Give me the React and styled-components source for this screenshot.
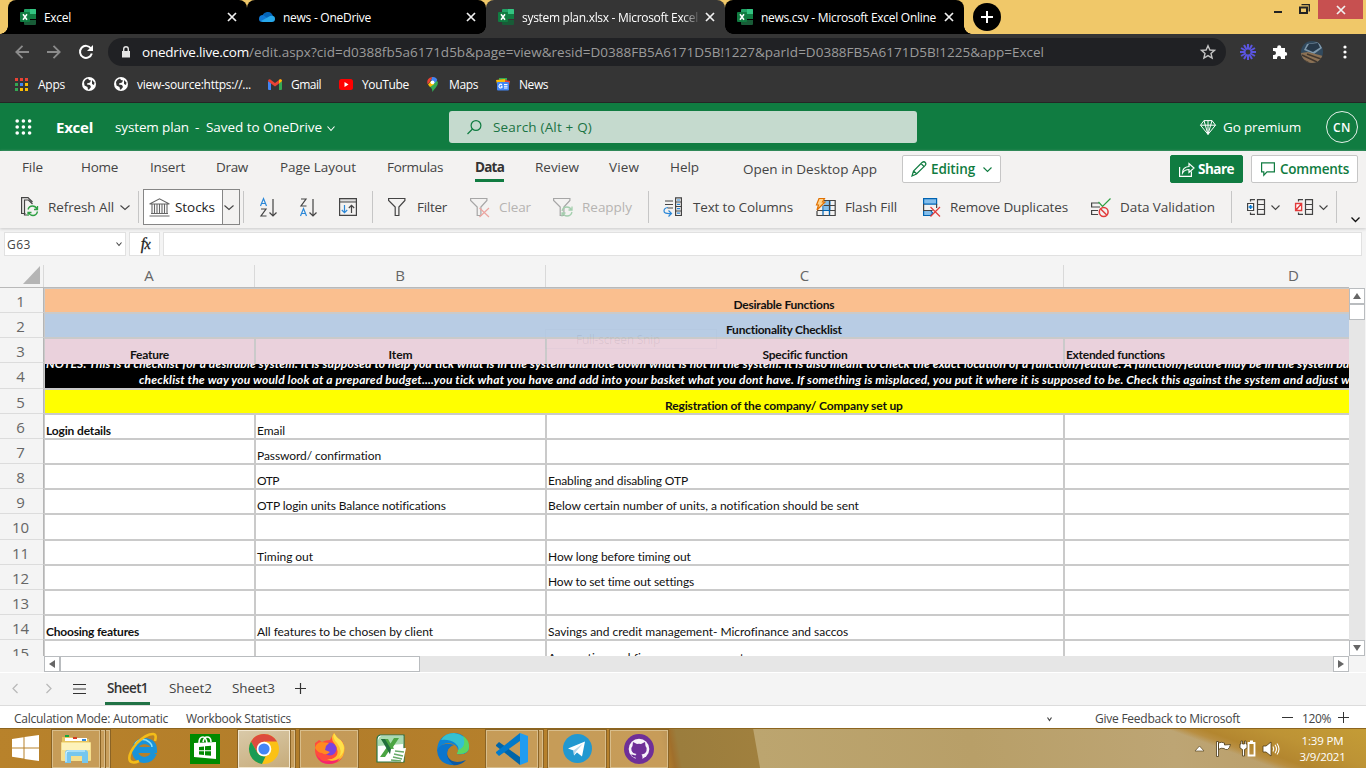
import React, { useLayoutEffect, useRef, useState } from "react";
import styled, { createGlobalStyle, css } from "styled-components";

const Global = createGlobalStyle`
  * { box-sizing: border-box; }
  html, body { margin: 0; padding: 0; overflow: hidden; }
  body { font-family: "Open Sans", "Noto Sans", sans-serif; font-size: 13.5px; color: #444; }
  svg { display: block; flex: none; overflow: visible; }
`;

/* ---------- text that is tracked to an exact width ---------- */
const TextBox = styled.span`
  display: block;
  flex: none;
  white-space: nowrap;
  width: ${(p) => (p.$w ? p.$w + "px" : "auto")};
  margin-left: ${(p) => p.$ml || 0}px;
  margin-top: ${(p) => p.$mt || 0}px;
  font-size: ${(p) => (p.$size ? p.$size + "px" : "inherit")};
  font-weight: ${(p) => p.$weight || "inherit"};
  color: ${(p) => p.$color || "inherit"};
`;

function Text({ children, w, ml, mt, size, weight, color }) {
  const ref = useRef(null);
  const [tracking, setTracking] = useState(0);
  useLayoutEffect(() => {
    if (!w || !ref.current) return;
    const natural = ref.current.getBoundingClientRect().width;
    setTracking((w - natural) / String(children).length);
  }, []);
  return (
    <TextBox $w={w} $ml={ml} $mt={mt} $size={size} $weight={weight} $color={color}>
      <span ref={ref} style={{ letterSpacing: tracking }}>{children}</span>
    </TextBox>
  );
}

const Glyph = styled.svg`
  width: ${(p) => p.$w}px;
  height: ${(p) => p.$h}px;
  margin-left: ${(p) => p.$ml || 0}px;
  margin-top: ${(p) => p.$mt || 0}px;
  fill: none;
  stroke: ${(p) => p.$stroke || "none"};
  stroke-width: ${(p) => p.$sw || 1};
`;

const Icon = ({ w, h, ml, mt, stroke, sw, children }) => (
  <Glyph viewBox={`0 0 ${w} ${h}`} $w={w} $h={h} $ml={ml} $mt={mt} $stroke={stroke} $sw={sw}>
    {children}
  </Glyph>
);

const Chevron = ({ w = 10, h = 5, ml, mt, color = "#444", sw = 1.1 }) => (
  <Icon w={w} h={h} ml={ml} mt={mt} stroke={color} sw={sw}>
    <path d={`M.5 .5L${w / 2} ${h - 0.5}L${w - 0.5} .5`} />
  </Icon>
);

const Screen = styled.div`
  width: 1366px;
  height: 768px;
  display: flex;
  flex-direction: column;
  overflow: hidden;
  background: #f4f4f4;
`;

/* ---------- browser chrome ---------- */
const TabStrip = styled.div`
  height: 34px;
  flex: none;
  display: flex;
  background: #f0c869;
  padding-left: 8px;
`;

const Tab = styled.div`
  position: relative;
  z-index: ${(p) => (p.$active ? 2 : 1)};
  width: 239px;
  height: 34px;
  display: flex;
  align-items: center;
  padding-left: 12px;
  border-radius: 8px 8px 0 0;
  background: ${(p) => (p.$active ? "#353535" : "#000")};
  color: #fff;
  font-size: 12px;
  &::before, &::after {
    content: "";
    position: absolute;
    bottom: 0;
    width: 8px;
    height: 8px;
  }
  &::before {
    left: -8px;
    background: radial-gradient(circle at 0 0, transparent 7.5px, ${(p) => (p.$active ? "#353535" : "#000")} 8px);
  }
  &::after {
    right: -8px;
    background: radial-gradient(circle at 100% 0, transparent 7.5px, ${(p) => (p.$active ? "#353535" : "#000")} 8px);
  }
`;

const TabTitle = styled.div`
  width: 176px;
  margin-left: 8px;
  overflow: hidden;
  ${(p) => p.$fade && css`mask-image: linear-gradient(90deg, #000 160px, transparent 179px);`}
`;

const TabDivider = styled.i`
  position: absolute;
  right: -1px;
  top: 8px;
  width: 1px;
  height: 19px;
  background: #555;
`;

const NewTab = styled.div`
  width: 28px;
  height: 28px;
  margin: 3px 0 0 9px;
  border-radius: 50%;
  background: #000;
  display: grid;
  place-items: center;
`;

const WindowButtons = styled.div`
  margin-left: auto;
  display: flex;
  height: 19px;
`;

const CloseWindow = styled.div`
  width: 45px;
  height: 19px;
  margin: 0 3px 0 8px;
  background: #c75050;
  display: grid;
  place-items: center;
`;

const AddressRow = styled.div`
  height: 36px;
  flex: none;
  display: flex;
  align-items: center;
  padding-left: 15px;
  background: #353535;
`;

const Omnibox = styled.div`
  width: 1118px;
  height: 28px;
  margin: -1px 0 0 15px;
  border-radius: 14px;
  background: #202124;
  display: flex;
  align-items: center;
  padding-left: 14px;
  font-size: 13.5px;
`;

const Avatar = styled.svg`
  && { overflow: hidden; }
  width: 22px;
  height: 22px;
  margin-left: 14px;
  border-radius: 50%;
`;

const Bookmarks = styled.div`
  height: 33px;
  flex: none;
  display: flex;
  align-items: center;
  padding: 0 0 4px 15px;
  background: #353535;
  border-bottom: 1px solid #252525;
  color: #fff;
  font-size: 12px;
`;

/* ---------- excel header ---------- */
const AppHeader = styled.header`
  height: 48px;
  flex: none;
  display: flex;
  align-items: center;
  padding-left: 15px;
  background: #107c41;
  color: #fff;
`;

const Search = styled.div`
  width: 468px;
  height: 32px;
  margin-left: 114px;
  border-radius: 3px;
  background: #c5dace;
  display: flex;
  align-items: center;
  padding-left: 18px;
  color: #1a7343;
`;

const UserBadge = styled.div`
  width: 32px;
  height: 32px;
  margin-left: 25px;
  border: 1px solid #e4f0e9;
  border-radius: 50%;
  display: grid;
  place-items: center;
  font-weight: 600;
`;

const Ribbon = styled.section`
  height: 77px;
  flex: none;
  background: #f3f2f1;
  box-shadow: 0 1px 3px #c8c8c8;
  position: relative;
`;

const RibbonTabs = styled.nav`
  height: 36px;
  display: flex;
  align-items: center;
  padding-left: 22px;
`;

const RibbonTab = styled.div`
  height: 26px;
  align-self: flex-start;
  margin: 5px 0 0 ${(p) => p.$ml || 0}px;
  padding-top: 2px;
  line-height: 19px;
  ${(p) => p.$active && css`
    color: #333;
    border-bottom: 3px solid #107c41;
  `}
`;

const RibbonButton = styled.button`
  height: 28px;
  width: ${(p) => p.$w}px;
  margin: 0 0 0 ${(p) => p.$ml}px;
  padding: 0 0 0 ${(p) => p.$pl}px;
  display: flex;
  align-items: center;
  border-radius: 2px;
  border: 1px solid ${(p) => (p.$solid ? "#107c41" : "#c6c6c6")};
  background: ${(p) => (p.$solid ? "#107c41" : "#fff")};
  color: ${(p) => (p.$solid ? "#fff" : "#107c41")};
  font: 600 13.5px "Open Sans", sans-serif;
`;

const Tools = styled.div`
  height: 40px;
  display: flex;
  align-items: center;
  padding-left: 21px;
`;

const Separator = styled.i`
  width: 1px;
  height: 32px;
  margin-left: ${(p) => p.$ml}px;
  background: #c6c6c6;
  flex: none;
`;

const StocksBox = styled.div`
  width: 97px;
  height: 36px;
  margin: 0 0 0 4px;
  flex: none;
  display: flex;
  align-items: center;
  border: 1px solid #868686;
  background: linear-gradient(90deg, #fff 78px, #868686 78px 79px, #f3f2f1 79px);
  padding-left: 5px;
  color: #222;
`;

const FormulaBar = styled.div`
  height: 37px;
  flex: none;
  display: flex;
  gap: 3px;
  padding: 4px 4px 9px;
  background: #f4f4f4;
`;

const Field = styled.div`
  width: ${(p) => (p.$w ? p.$w + "px" : "auto")};
  flex: ${(p) => (p.$w ? "none" : 1)};
  height: 24px;
  border: 1px solid #e1e1e1;
  background: #fff;
  display: flex;
  align-items: center;
  justify-content: ${(p) => (p.$center ? "center" : "flex-start")};
  padding-left: ${(p) => (p.$center ? 2 : 2)}px;
`;

const Fx = styled.span`
  font: italic 16px "Liberation Serif", serif;
  letter-spacing: -0.5px;
  color: #222;
  -webkit-text-stroke: 0.3px #222;
  small { font-size: 14px; }
`;

/* ---------- sheet ---------- */
const ColumnHeads = styled.div`
  height: 22px;
  flex: none;
  display: flex;
  background: #f4f4f4;
  color: #666;
  font-size: 15px;
`;

const Corner = styled.div`
  width: 44px;
  flex: none;
  display: flex;
  justify-content: flex-end;
  padding: 1px 3px 0 0;
  border-right: 1px solid #d9d9d9;
`;

const ColumnHead = styled.div`
  width: ${(p) => p.$w}px;
  flex: none;
  line-height: 20px;
  text-align: center;
  border-right: 1px solid #d9d9d9;
`;

const SheetArea = styled.div`
  height: 369px;
  flex: none;
  display: flex;
  position: relative;
`;

const SheetView = styled.div`
  width: 1349px;
  overflow: hidden;
  border-top: 1px solid #b9b9b9;
`;

const TopEdge = styled.div`
  height: 1px;
  margin-left: 44px;
  background: #cacaca;
`;

const Row = styled.div`
  height: ${(p) => p.$h}px;
  display: flex;
`;

const RowHead = styled.div`
  width: 44px;
  flex: none;
  padding-top: 1px;
  text-align: center;
  padding-right: 2px;
  font-size: 15px;
  line-height: 24px;
  color: #666;
  background: #f4f4f4;
  border-right: 1px solid #b5b5b5;
  border-bottom: 1px solid #dcdcdc;
  margin: -1px 0 1px;
`;

const Cell = styled.div`
  width: ${(p) => p.$w}px;
  flex: none;
  display: flex;
  align-items: flex-end;
  justify-content: ${(p) => (p.$center ? "center" : "flex-start")};
  padding: 0 0 ${(p) => p.$lift || 0}px ${(p) => (p.$center ? 0 : 1)}px;
  overflow: hidden;
  background: ${(p) => p.$bg || "#fff"};
  border-right: ${(p) => (p.$bare ? 0 : 2)}px solid #cacaca;
  border-bottom: ${(p) => (p.$flush ? 0 : 2)}px solid #cacaca;
  color: ${(p) => p.$fg || "#111"};
  font-family: Lato, sans-serif;
  font-size: 12px;
  font-weight: ${(p) => (p.$bold ? 700 : 400)};
  line-height: 15px;
`;

const EdgeLine = styled.i`
  width: 1px;
  flex: none;
  background: #cacaca;
`;

const Notes = styled.div`
  align-self: flex-end;
  font-style: italic;
  line-height: 16px;
  color: #fff;
`;

const FadingSnip = styled.div`
  position: absolute;
  left: 545px;
  top: 42px;
  width: 172px;
  height: 20px;
  padding: 1px 0 0 30px;
  border: 1px solid rgba(140, 150, 190, 0.06);
  color: rgba(70, 60, 80, 0.09);
  font-size: 12px;
`;

const ScrollColumn = styled.div`
  width: 16px;
  display: flex;
  flex-direction: column;
  background: #e6e6e6;
  margin-top: 1px;
`;

const ScrollRow = styled.div`
  height: 16px;
  flex: none;
  width: 1305px;
  margin-left: 44px;
  display: flex;
  background: #e6e6e6;
`;

const ScrollPart = styled.div`
  width: ${(p) => p.$w}px;
  height: 16px;
  margin-left: ${(p) => p.$ml || 0}px;
  margin-top: ${(p) => p.$mt || 0};
  border: 1px solid #b9bcbf;
  background: #fff;
  display: grid;
  place-items: center;
`;

const SheetTabs = styled.div`
  height: 34px;
  flex: none;
  display: flex;
  align-items: center;
  border-top: 1px solid #fff;
  border-bottom: 1px solid #dcdcdc;
  background: #f4f4f4;
  padding-left: 12px;
`;

const SheetTab = styled.div`
  height: 32px;
  line-height: 31px;
  margin-left: ${(p) => p.$ml}px;
  padding: 0 2px;
  ${(p) => p.$active && css`box-shadow: inset 0 -3px #217346; color: #333;`}
`;

const StatusBar = styled.div`
  height: 22px;
  flex: none;
  display: flex;
  align-items: center;
  padding: 3px 0 0 14px;
  background: #fff;
  font-size: 12px;
`;

/* ---------- taskbar ---------- */
const Taskbar = styled.footer`
  height: 40px;
  flex: none;
  display: flex;
  border-top: 1px solid #8d651f;
  background:
    linear-gradient(200deg, #c49c36 0, #bd9335 35px, #b3862f 56px, rgba(184, 140, 60, 0.9) 62px, transparent 68px),
    linear-gradient(80deg, #b8822b 0, #b27d2a 330px, #b8822d 655px, #a06f2b 665px, #9b7d3d 672px, #a0803e 748px, #bca56f 749px, #b89f68 960px, #bda574 1160px, #b99a62 100%);
`;

const TaskSlot = styled.div`
  width: 62px;
  display: flex;
  align-items: center;
  padding: 0 3px 0 1px;
`;

const TaskPanel = styled.div`
  width: ${(p) => (p.$stack ? 52 : 59)}px;
  height: 38px;
  display: grid;
  place-items: center;
  border: 1px solid ${(p) => (p.$front ? "#f1e6cf" : "#d8bd8b")};
  outline: 1px solid #8a6325;
  background: ${(p) => (p.$front ? "linear-gradient(160deg,#d9c9a8,#c7ac7b)" : "rgba(211,178,125,.55)")};
`;

const PlainTask = styled.div`
  width: 58px;
  display: grid;
  place-items: center;
`;

const StackEdge = styled.i`
  width: 4px;
  height: 38px;
  border: 1px solid #d8bd8b;
  border-left: 0;
  outline: 1px solid #8a6325;
  background: rgba(211, 178, 125, 0.6);
  margin-left: 1px;
`;

const StartButton = styled.div`
  width: 51px;
  padding: 6px 0 0 12px;
`;

const Tray = styled.div`
  margin-left: auto;
  width: 171px;
  display: flex;
  align-items: center;
  color: #fff;
`;

const Clock = styled.div`
  margin-left: 19px;
  width: 47px;
  display: flex;
  flex-direction: column;
  align-items: center;
  font-size: 11.5px;
  line-height: 16px;
  padding-top: 1px;
`;

/* ---------- drawings ---------- */
const ExcelFavicon = () => (
  <Icon w={16} h={16}>
    <path fill="#21a366" d="M5 0h10q1 0 1 1v4H4V1q0-1 1-1z" />
    <path fill="#33c481" d="M10 0h5q1 0 1 1v4h-6z" />
    <path fill="#107c41" d="M4 5h12v5H4z" />
    <path fill="#185c37" d="M4 8h6v3h6v4q0 1-1 1H5q-1 0-1-1z" />
    <rect y="3" width="10" height="10" rx="1" fill="#107c41" />
    <path d="M3 5.2l4 5.6M7 5.2l-4 5.6" stroke="#fff" strokeWidth="1.5" />
  </Icon>
);

const CloudFavicon = () => (
  <Icon w={16} h={16}>
    <path fill="#0364b8" d="M3 9C3 5 6 3 9 3c3 0 4 2 5 4L8 11z" />
    <path fill="#0f78d4" d="M0 10q0-4 4-4l7 5-6 2H3q-3 0-3-3z" />
    <path fill="#28a8ea" d="M2 12l9-5q5-1 5 3 0 3-3 3H4z" />
  </Icon>
);

const CloseX = ({ ml }) => (
  <Icon w={8} h={8} ml={ml} stroke="#f1f1f1" sw={1.7}><path d="M0 0l8 8M8 0l-8 8" /></Icon>
);

const GlobeMark = ({ ml }) => (
  <Icon w={14} h={14} ml={ml}>
    <circle cx="7" cy="7" r="7" fill="#fff" />
    <path fill="#353535" d="M2 5q1-3 4-3.500l1 1.500 2 .5-1 2-3 1v1l3 .5 1 2-2 2.500H6L5.500 10 2.500 8.500zM10 3l2.500 2.500L12 8l-2-1z" />
  </Icon>
);

const BookmarkApps = () => (
  <Icon w={13} h={13}>
    {["#ea4335", "#ea4335", "#ea4335", "#34a853", "#4285f4", "#fbbc05", "#34a853", "#fbbc05", "#fbbc05"].map((c, i) => (
      <rect key={i} x={(i % 3) * 5} y={Math.floor(i / 3) * 5} width="3" height="3" fill={c} />
    ))}
  </Icon>
);

const Funnel = ({ ml, muted, mark }) => (
  <Icon w={20} h={20} ml={ml} stroke={muted ? "#a6a6a6" : "#444"} sw={1.2}>
    <path d="M.6 1.500h16.300v2l-6 6.500v8.500H7.200V10l-6.600-6.500z" />
    {mark === "clear" && <path stroke="#eca5a0" d="M9.500 11l9.500 9M19 11l-9.500 9" />}
    {mark === "again" && <g stroke="#a4cfae" strokeWidth="1.300"><path d="M9 14q1-4 5-4 3 0 4.500 3M19 9.500V13h-3.500M19 15q-1 4-5 4-3 0-4.500-3M9 19.500V16h3.500" /></g>}
  </Icon>
);

const SortIcon = ({ ml, down }) => (
  <Icon w={17} h={19} ml={ml} stroke="#444" sw={1.2}>
    {down ? (
      <g><path d="M1 1h5L1 8h5.500" /><path stroke="#2b88d8" d="M.5 18l3-7.500L6.500 18M1.500 15.500h4" /></g>
    ) : (
      <g><path stroke="#2b88d8" d="M.5 8l3-7.500L6.500 8M1.500 5.500h4" /><path d="M1 11h5l-5 7h5.500" /></g>
    )}
    <path d="M13 1v17M9.500 14.500L13 18l3.500-3.500" />
  </Icon>
);

const OutlineIcon = ({ ml, red }) => (
  <Icon w={18} h={16} ml={ml} stroke="#444" sw={1.2}>
    <path d="M10.500 .6h7v14.800h-7zM10.500 5.500h7M10.500 10.500h7M3.500 2.500V.6h4.500M3.500 13.500v1.900h4.500" />
    {red ? <path stroke="#e23b3b" strokeWidth="1.400" fill="#fff" d="M.6 4.500h6v7h-6zM.6 11.500l6-7" /> : <g><path fill="#fff" d="M.6 4.500h6v7h-6z" /><path stroke="#0078d4" strokeWidth="1.600" d="M3.600 6v4M1.600 8h4" /></g>}
  </Icon>
);

const COLS = [211, 291, 518, 460];
const HEIGHTS = [25, 25, 25, 26, 25, 25, 25, 25, 25, 26, 25, 25, 25, 25, 26];
const MERGED = { 1: ["#fabf8f", "Desirable Functions", 101], 2: ["#b8cce4", "Functionality Checklist", 116], 5: ["#ffff00", "Registration of the company/ Company set up", 238] };
const DATA = {
  3: [["Feature", 39], ["Item", 24], ["Specific function", 85], ["Extended functions", 99]],
  6: [["Login details", 65], ["Email", 28]],
  7: [null, ["Password/ confirmation", 124]],
  8: [null, ["OTP", 22], ["Enabling and disabling OTP", 140]],
  9: [null, ["OTP login units Balance notifications", 189], ["Below certain number of units, a notification should be sent", 311]],
  11: [null, ["Timing out", 56], ["How long before timing out", 143]],
  12: [null, null, ["How to set time out settings", 146]],
  14: [["Choosing features", 93], ["All features to be chosen by client", 176], ["Savings and credit management- Microfinance and saccos", 300]],
  15: [null, null, ["Accounting and finance management", 196]],
};

function SheetRow({ n }) {
  const h = HEIGHTS[n - 1];
  const merged = MERGED[n];
  return (
    <Row $h={h}>
      <RowHead>{n}</RowHead>
      <EdgeLine />
      {merged && (
        <Cell $w={1478} $bg={merged[0]} $center $bold $bare>
          <Text w={merged[2]}>{merged[1]}</Text>
        </Cell>
      )}
      {n === 4 && (
        <Cell $w={1478} $bg="#000" $bold $bare>
          <Notes>
            <Text w={1303}>NOTES. This is a checklist for a desirable system. It is supposed to help you tick what is in the system and note down what is not in the system. It is also meant to check the exact location of a function/feature. A function/feature may be in the system bu</Text>
            <Text w={1211} ml={93}>checklist the way you would look at a prepared budget....you tick what you have and add into your basket what you dont have. If something is misplaced, you put it where it is supposed to be. Check this against the system and adjust w</Text>
          </Notes>
        </Cell>
      )}
      {!merged && n !== 4 && COLS.map((w, i) => {
        const d = DATA[n] && DATA[n][i];
        return (
          <Cell key={i} $w={w} $bg={n === 3 ? "#ead1dc" : "#fff"} $center={n === 3 && i < 3} $bold={n === 3 || i === 0} $flush={n === 3} $lift={n === 3 ? 2 : 0}>
            {d && <Text w={d[1]}>{d[0]}</Text>}
          </Cell>
        );
      })}
    </Row>
  );
}

const TABS = [
  ["Excel", 27, ExcelFavicon],
  ["news - OneDrive", 88, CloudFavicon],
  ["system plan.xlsx - Microsoft Excel", 176, ExcelFavicon],
  ["news.csv - Microsoft Excel Online", 175, ExcelFavicon],
];

const Browser = () => (
  <>
    <TabStrip>
      {TABS.map(([title, w, Fav], i) => (
        <Tab key={title} $active={i === 2}>
          <Fav />
          <TabTitle $fade={i === 2}><Text w={w}>{title}</Text></TabTitle>
          <CloseX ml={8} />
          {i === 0 && <TabDivider />}
        </Tab>
      ))}
      <NewTab><Icon w={12} h={12} stroke="#fff" sw={2}><path d="M6 0v12M0 6h12" /></Icon></NewTab>
      <WindowButtons>
        <Icon w={8} h={3} mt={11}><rect width="8" height="2" fill="#222" /></Icon>
        <Icon w={11} h={11} ml={17} mt={4} stroke="#222" sw={1.3}><path strokeWidth="2" d="M1 3.500h7V9H1z" /><path d="M2.500 .6h7.800v7" /></Icon>
        <CloseWindow><CloseX /></CloseWindow>
      </WindowButtons>
    </TabStrip>
    <AddressRow>
      <Icon w={14} h={14} stroke="#8b8b8b" sw={1.8}><path d="M14 7H1.500M7.500 .8L1.300 7l6.200 6.200" /></Icon>
      <Icon w={14} h={14} ml={18} stroke="#8b8b8b" sw={1.8}><path d="M0 7h12.500M6.500 .8L12.700 7l-6.200 6.200" /></Icon>
      <Icon w={14} h={14} ml={18} stroke="#fff" sw={2}><path d="M12 3.500A6 6 0 1 0 12.800 8.500" /><path fill="#fff" stroke="none" d="M14 0v6H8z" /></Icon>
      <Omnibox>
        <Icon w={8} h={12}><path fill="#e4e4e4" d="M0 5h8v6.500H0z" /><path stroke="#e4e4e4" strokeWidth="1.400" d="M1.700 5V3a2.300 2.300 0 0 1 4.600 0v2" /></Icon>
        <Text w={107} ml={12} color="#fff">onedrive.live.com</Text>
        <Text w={795} color="#9b9b9b">/edit.aspx?cid=d0388fb5a6171d5b&amp;page=view&amp;resid=D0388FB5A6171D5B!1227&amp;parId=D0388FB5A6171D5B!1225&amp;app=Excel</Text>
        <Icon w={14} h={14} ml={157} stroke="#c4c4c4" sw={1.4}><path d="M7 .8l1.900 4.200 4.600.4-3.500 3 1.100 4.600L7 10.600 2.900 13 4 8.400.5 5.400 5.100 5z" /></Icon>
      </Omnibox>
      <Icon w={16} h={16} ml={14} stroke="#5b55e0" sw={2}>
        {[...Array(12)].map((_, i) => <path key={i} d="M8 0v5.500" transform={`rotate(${i * 30} 8 8)`} />)}
      </Icon>
      <Icon w={14} h={14} ml={17}><path fill="#fff" d="M0 3h4.200V2.200a2 2 0 0 1 4 0V3H12v4h.3a1.900 1.900 0 0 1 0 3.800H12V14H8v-1a2 2 0 0 0-4 0v1H0v-4h1a2 2 0 0 0 0-4H0z" /></Icon>
      <Avatar viewBox="0 0 22 22">
        <rect width="22" height="22" fill="#31495d" />
        <path fill="#7f98ab" d="M3 9l3-6 12-2 3 6-8 6z" /><path fill="#263849" d="M5 8l3-5 9-1 2 4.500-7 4.500z" />
        <path fill="#8b7154" d="M0 12l7-1 15 4v7H0z" /><path stroke="#41372e" strokeWidth="1.500" fill="none" d="M1 14l15 7M6 13l14 5M0 18l8 4" />
      </Avatar>
      <Icon w={4} h={14} ml={20}><circle cx="2" cy="2" r="1.600" fill="#fff" /><circle cx="2" cy="7" r="1.600" fill="#fff" /><circle cx="2" cy="12" r="1.600" fill="#fff" /></Icon>
    </AddressRow>
    <Bookmarks>
      <BookmarkApps />
      <Text w={27} ml={10}>Apps</Text>
      <GlobeMark ml={17} />
      <GlobeMark ml={18} />
      <Text w={114} ml={9}>view-source:https://...</Text>
      <Icon w={14} h={11} ml={17}><path fill="#4285f4" d="M0 2l3 2v7H1q-1 0-1-1z" /><path fill="#34a853" d="M14 2l-3 2v7h2q1 0 1-1z" /><path fill="#ea4335" d="M0 2q0-2 2-1.800L7 4l5-3.800Q14 0 14 2l-3 2.500L7 7.500 3 4.500z" /><path fill="#fbbc04" d="M14 2l-3 2.500V1l1-.8Q14 0 14 2z" /></Icon>
      <Text w={30} ml={9}>Gmail</Text>
      <Icon w={14} h={11} ml={18}><rect width="14" height="11" rx="2.500" fill="#f00" /><path fill="#fff" d="M5.500 3l4 2.500-4 2.500z" /></Icon>
      <Text w={47} ml={9}>YouTube</Text>
      <Icon w={11} h={15} ml={18}><path fill="#34a853" d="M5.500 15Q5 11 2.500 9l6-6Q11 4 11 5.500q0 3-2.500 5.500-2 2-3 4z" /><path fill="#fbbc04" d="M1 7.500l3-3.500 3.500 3L3 10z" /><path fill="#4285f4" d="M5 0q4-.5 5.300 3L7.500 6.500 4 3z" /><path fill="#ea4335" d="M5.500 0L2 6 .3 7Q-.8 1 5.500 0z" /><circle cx="5.500" cy="5.300" r="1.900" fill="#fff" /></Icon>
      <Text w={29} ml={11}>Maps</Text>
      <Icon w={14} h={13} ml={18}><path fill="#34a853" d="M3 0h8v4H3z" /><path fill="#fbbc04" d="M0 2l9-1 1 3-9 2z" /><path fill="#ea4335" d="M9 2l5 1-1 5H9z" /><rect x="1" y="4" width="12" height="8.500" rx="1" fill="#4285f4" /><path stroke="#fff" strokeWidth="1.100" d="M6 6.800a1.800 1.800 0 1 0 0 2.600V8.300H4.700M8 6.500h3.500M8 8.300h3.500M8 10h3.500" /></Icon>
      <Text w={29} ml={9}>News</Text>
    </Bookmarks>
  </>
);

const Header = () => (
  <AppHeader>
    <Icon w={17} h={16}>
      {[...Array(9)].map((_, i) => <circle key={i} cx={2.2 + (i % 3) * 6.200} cy={2 + Math.floor(i / 3) * 6} r="1.800" fill="#fff" />)}
    </Icon>
    <Text w={37} ml={24} size={15} weight={700}>Excel</Text>
    <Text w={74} ml={22}>system plan</Text>
    <Text w={5} ml={6}>-</Text>
    <Text w={116} ml={6}>Saved to OneDrive</Text>
    <Chevron w={8} h={5} ml={5} mt={2} color="#fff" />
    <Search>
      <Icon w={15} h={15} stroke="#107c41" sw={1.2}><circle cx="9" cy="5.500" r="4.900" /><path d="M5.500 9L.5 14" /></Icon>
      <Text w={99} ml={11}>Search (Alt + Q)</Text>
    </Search>
    <Icon w={16} h={15} ml={283} stroke="#fff" sw={1}><path d="M4 .6h8l3.500 4.600L8 14.400.5 5.200zM.5 5.200h15M4 .6l1.300 4.600L8 14.400l2.700-9.200L12 .6M8 .6v13" /></Icon>
    <Text w={78} ml={7}>Go premium</Text>
    <UserBadge><Text w={18} size={12} mt={1}>CN</Text></UserBadge>
  </AppHeader>
);

const MENU = [["File", 21, 0], ["Home", 37, 38], ["Insert", 35, 32], ["Draw", 32, 31], ["Page Layout", 76, 32], ["Formulas", 56, 31], ["Data", 29, 32], ["Review", 44, 31], ["View", 30, 30], ["Help", 29, 31]];

const RibbonArea = () => (
  <Ribbon>
    <RibbonTabs>
      {MENU.map(([label, w, ml]) => (
        <RibbonTab key={label} $ml={ml} $active={label === "Data"}>
          <Text w={w} weight={label === "Data" ? 700 : 400}>{label}</Text>
        </RibbonTab>
      ))}
      <Text w={134} ml={44}>Open in Desktop App</Text>
      <RibbonButton $w={99} $ml={25} $pl={8}>
        <Icon w={16} h={16} stroke="#107c41" sw={1.2}><path d="M1 15l1.500-5L11 1.500q2-1.500 3.300 0 1.300 1.400-.3 3.200L5.500 13zM2.500 10L6 13M10 2.500L13.500 6" /></Icon>
        <Text w={44} ml={4}>Editing</Text>
        <Chevron w={9} h={5} ml={8} color="#107c41" />
      </RibbonButton>
      <RibbonButton $solid $w={73} $ml={169} $pl={8}>
        <Icon w={16} h={15} stroke="#fff" sw={1.2}><path d="M.6 5v9.400h11.800V9.500M3.500 11q0-6 6.500-6.500V1.500L15 6l-5 4.500V7.500Q5.500 7.500 3.500 11z" /></Icon>
        <Text w={36} ml={3} weight={700}>Share</Text>
      </RibbonButton>
      <RibbonButton $w={107} $ml={8} $pl={9}>
        <Icon w={14} h={14} stroke="#107c41" sw={1.200}><path d="M.6 .8h12.800v9H6l-3.200 3.400V9.800H.6z" /></Icon>
        <Text w={69} ml={5}>Comments</Text>
      </RibbonButton>
    </RibbonTabs>
    <Tools>
      <Icon w={17} h={20} stroke="#444" sw={1.2}>
        <path d="M4.500 16.500H.6V.6h7M7 .6L11.500 5M6 18H3.500V3h4l4 4" />
        <path stroke="#2ea043" strokeWidth="1.300" d="M7 12.500q1-3.500 4.500-3.500 3 0 4.500 3M16.500 9v3.500H13M16.500 14.500q-1 4-4.500 4-3 0-4.500-3M7 19v-3.500h3.500" />
      </Icon>
      <Text w={66} ml={10}>Refresh All</Text>
      <Chevron ml={6} />
      <Separator $ml={8} />
      <StocksBox>
        <Icon w={21} h={19} stroke="#666" sw={1.1}><path d="M.6 6L10.500 .8 20.400 6zM2 15.500h17M.5 18h20M3 6v9.500M5.500 6v9.500M8 6v9.500M13 6v9.500M15.500 6v9.500M18 6v9.500M10.500 6v9.500" /></Icon>
        <Text w={40} ml={5}>Stocks</Text>
        <Chevron w={10} h={5} ml={9} />
      </StocksBox>
      <Separator $ml={3} />
      <SortIcon ml={16} />
      <SortIcon ml={23} down />
      <Icon w={18} h={18} ml={22} stroke="#444" sw={1.2}><path fill="#ddd" d="M.6 .6h16.800v3.400H.6z" /><path d="M.6 4v13.400h16.800V4M12.500 15V7.500M9.800 10l2.700-2.700L15.200 10" /><path stroke="#2b88d8" d="M5.500 7v7.500M2.800 12l2.700 2.700L8.200 12" /></Icon>
      <Separator $ml={15} />
      <Funnel ml={15} />
      <Text w={30} ml={9}>Filter</Text>
      <Funnel ml={23} muted mark="clear" />
      <Text w={32} ml={9} color="#b6b4b2">Clear</Text>
      <Funnel ml={22} muted mark="again" />
      <Text w={50} ml={9} color="#b6b4b2">Reapply</Text>
      <Separator $ml={16} />
      <Icon w={19} h={20} ml={14} stroke="#444" sw={1.2}><path d="M2 4h8M2 7.500h8M4.500 11H10M12.600 .8h5.800v17.700h-5.800zM12.600 5h5.800M12.600 9.500h5.800M12.600 14h5.800" /><path stroke="#2b88d8" d="M5 10.500q-4 .5-4 3.500t7 2.500M5.500 13.500l3 3-3 3M14 3h3M14 7.300h3M14 11.700h3M14 16.200h3" /></Icon>
      <Text w={100} ml={11}>Text to Columns</Text>
      <Icon w={20} h={18} ml={23} stroke="#444" sw={1.2}><path fill="#83beec" stroke="none" d="M8 3h7v10H8z" /><path d="M7.500 2.500h11.700v15H1V13M1 12.500h18M13.500 2.500v15M7.500 7.500h11.700" /><path stroke="#0063b1" d="M7 7.500v10M7 12.500h6.500v5" /><path fill="#ffd28a" stroke="#e07000" d="M3 .5h5.500L6.500 4H9L1 12l1.500-5H.5z" /></Icon>
      <Text w={52} ml={9}>Flash Fill</Text>
      <Icon w={18} h={19} ml={26} stroke="#0063b1" sw={1.2}><path fill="#83beec" d="M.6 .6h13v5.500H.6zM.6 12.500h7l2 2.500-2 2.500h-7z" /><path stroke="#444" d="M.6 6v6.500h9M13.600 6v4" /><path stroke="#e23b3b" d="M7.500 9l9.500 9.500M17 9l-9.500 9.500" /></Icon>
      <Text w={118} ml={9}>Remove Duplicates</Text>
      <Icon w={20} h={19} ml={23} stroke="#444" sw={1.2}><path d="M8 5H.6v4H9M7 12.500H.6v4h6.500" /><path stroke="#2ea043" d="M7.500 4l4 4.500L19.500 .5" /><g stroke="#e23b3b" strokeWidth="1.500"><circle cx="12.700" cy="14" r="4.400" /><path d="M9.700 11l6 6" /></g></Icon>
      <Text w={95} ml={9}>Data Validation</Text>
      <Separator $ml={16} />
      <OutlineIcon ml={15} />
      <Chevron ml={6} w={9} />
      <OutlineIcon ml={15} red />
      <Chevron ml={6} w={9} />
      <Separator $ml={8} />
      <Chevron ml={14} w={9} mt={25} color="#111" sw={1.3} />
    </Tools>
  </Ribbon>
);

const TaskbarArea = () => (
  <Taskbar>
    <StartButton><Icon w={27} h={26}><path fill="#fff" d="M0 4l11.500-1.800v10.300H0zM12.500 2L27 0v12.500H12.500zM0 13.500h11.500v10L0 21.800zM12.500 13.500H27V26l-14.500-2z" /></Icon></StartButton>
    <TaskSlot>
      <TaskPanel $stack><Icon w={31} h={29}>
        <path fill="#e6c45f" d="M1 3h10l2 2h15v5H1z" /><path fill="#fff" d="M4 4h22v3H4z" /><path fill="#14a73b" d="M4 1h4v2H4z" /><path fill="#d63b23" d="M12 3h4v2h-4z" /><path fill="#368ad8" d="M21 5h4v2h-4z" />
        <rect y="8" width="30" height="19" rx="1" fill="#f5df8d" /><path fill="#fdf2ba" d="M1 9h28v7H1z" /><path fill="#76c6ee" d="M4 29V19q0-3 3-3h17q3 0 3 3v10h-6v-7H10v7z" /><path stroke="#d6f4ff" strokeWidth="1.200" d="M5 28v-8q0-3 3-3h16" />
      </Icon></TaskPanel>
      <StackEdge /><StackEdge />
    </TaskSlot>
    <TaskSlot><PlainTask><Icon w={30} h={31}>
      <path stroke="#1a93d9" strokeWidth="6" d="M26 20q-3 7-10 7-9-1-9-10 1-9 10-9 9 1 9 9H8" /><path stroke="#8ce1fb" strokeWidth="1.500" d="M7 11q4-6 11-4 6 3 6 7" /><path stroke="#f4bc18" strokeWidth="2.600" d="M27 8q2-7-2-7-7 0-16 9Q-1 22 2 28q3 3 9 0" />
    </Icon></PlainTask></TaskSlot>
    <TaskSlot><PlainTask><Icon w={30} h={30}>
      <rect width="30" height="30" fill="#008a00" /><path fill="#fff" d="M4 9l22-1v17L4 23z" /><path stroke="#fff" strokeWidth="1.600" d="M9 9q0-6 4-6 3 0 4 6M13 8q1-5 4-5 4 0 4 5" /><path fill="#008a00" d="M9 13l5-.6v3.800H9zM15 12.300l6-.6v4.500h-6zM9 17.200h5V21l-5-.4zM15 17.200h6v4.500l-6-.5z" />
    </Icon></PlainTask></TaskSlot>
    <TaskSlot>
      <TaskPanel $stack $front><Icon w={30} h={30}>
        <circle cx="15" cy="15" r="15" fill="#fbc116" /><path fill="#dd4b3e" d="M2 7.500A15 15 0 0 1 28 7.500H15L8.500 19z" /><path fill="#1a9b55" d="M2 7.500L8.500 19q3 4 8 3.500L13 29.900A15 15 0 0 1 2 7.500z" /><circle cx="15" cy="15" r="7.300" fill="#fff" /><circle cx="15" cy="15" r="5.600" fill="#4285f4" />
      </Icon></TaskPanel><StackEdge />
    </TaskSlot>
    <TaskSlot><TaskPanel><Icon w={31} h={32}>
      <path fill="#ff4b3e" d="M1 10q2-1 4-3l3 2q4-2 8-2l4-7q2 6 8 8 3 5 2 11-2 12-15 12Q2 30 1 18z" /><path fill="#ffbd2e" d="M20 0q-4 5 0 10 5 6 3 12-3 5-10 4 10 6 16-3 4-10-2-15-4-3-7-8z" /><path fill="#ffe14a" d="M20 0q-2 5 3 10 6 8 2 14 5-3 5-9-1-7-5-9-3-2-5-6z" /><path fill="#f5246e" d="M2 21q5 9 14 7 6 0 10-3-4 6-11 6-10 0-13-10z" /><circle cx="16" cy="16" r="6.500" fill="#7a43dd" /><path fill="#ff8a20" d="M1 15q1-5 6-6l8 1-3 3-1 4 5 2q-4 4-8 1-4 0-7-5z" />
    </Icon></TaskPanel></TaskSlot>
    <TaskSlot><PlainTask><Icon w={30} h={30}>
      <path fill="#fff" stroke="#287542" strokeWidth="1.200" d="M4 1h24v27H1V5q0-3 3-4z" /><path fill="#a9dbb0" d="M5 2h22v8L2 12V6q1-3 3-4z" /><path fill="#4ba543" d="M5 5h7l2.500 4.500L18 4h5l-6 9 5 9h-7l-2-5-4 6H4l7-10z" /><path fill="#226e3d" d="M5 5h4l10 17h-4z" /><path fill="#fff" d="M15 15l15-1-3 14-14-2z" /><path stroke="#69aa6b" strokeWidth="1.500" d="M19 17l9 1M18 20l9 2M17 23l9 2M15 26l10 1" />
    </Icon></PlainTask></TaskSlot>
    <TaskSlot><PlainTask><Icon w={32} h={32}>
      <path fill="#0d84d8" d="M0 17Q1 2 16 0q13 0 16 13 0 10-12 8 3-5-2-9-10-6-18 5z" /><path fill="#35c1d0" d="M4 7q4-7 13-7 13 2 15 13 0 9-12 8 4-6-2-11-6-4-14-3z" /><path fill="#5bd660" d="M26 3q6 4 6 10 0 9-12 8 1-2 1-4 9-3 5-14z" /><path fill="#0c59a4" d="M15 12q-7 5-4 12 5 8 18 3-5 6-14 5Q2 30 5 18q3-6 10-6z" /><path fill="#0a75ce" d="M0 17q5-9 17-5-8 3-7 11 2 6 7 9Q1 32 0 17z" />
    </Icon></PlainTask></TaskSlot>
    <TaskSlot>
      <TaskPanel $stack><Icon w={32} h={32}><path fill="#0065a9" d="M0 12l3-3 21 15v8L0 13z" /><path fill="#007acc" d="M0 20l3 3L24 8V0L0 19z" /><path fill="#1f9cf0" d="M24 0l8 3v26l-8 3z" /></Icon></TaskPanel><StackEdge />
    </TaskSlot>
    <TaskSlot><TaskPanel><Icon w={29} h={29}><circle cx="14.500" cy="14.500" r="14.500" fill="#2298d0" /><path fill="#fff" d="M5 14.500l17-7-3 15-5-4-3 3-.5-5z" /><path fill="#b9d8ea" d="M10.500 16.500L20 9.500l-7 8-2 4z" /></Icon></TaskPanel></TaskSlot>
    <TaskSlot><TaskPanel><Icon w={30} h={30}><circle cx="15" cy="15" r="15" fill="#6f2f98" /><circle cx="15" cy="15" r="10.300" fill="#f7f2fa" /><path fill="#6f2f98" d="M9 8l4 2q2-.5 4 0l4-2 .5 4q2 2 1 5-1 3-5 3.500 1 1 1 3V26h-7v-2.500q-3 0-4.500-3 2 0 4.500 1 0-1 1-1.500-4-.5-5-3.500-1-2.500 1-4.500z" /></Icon></TaskPanel></TaskSlot>
    <Tray>
      <Icon w={9} h={5} stroke="#5b4a25" sw={0.7}><path fill="#fff" d="M0 5l4.500-5L9 5z" /></Icon>
      <Icon w={15} h={16} ml={12} stroke="#4b3a18" sw={0.8}><path fill="#fff" d="M.5 .5h2V15.500h-2zM2.500 2q3-1.500 6 0v2l6-.5q-1 4-3 5-2 .5-3.500-1Q5 6.500 2.500 8.500z" /></Icon>
      <Icon w={16} h={17} ml={9} stroke="#4b3a18" sw={0.8}><path fill="#fff" d="M0 4h1V1h1.500v3h2V1H6v3h1v4L4.500 9.500V16h-2V9.500L0 8z" /><path stroke="#fff" strokeWidth="1.800" d="M8.500 3h6v12.500h-6zM10 1.500h3" /></Icon>
      <Icon w={17} h={16} ml={7} stroke="#fff" sw={1.1}><path fill="#fff" stroke="#4b3a18" strokeWidth=".8" d="M0 5h3l5-4v14l-5-4H0z" /><path d="M10 5.500q1.500 2.500 0 5M12 3.800q3 4.200 0 8.400M14 2.500q4 5.500 0 11" /></Icon>
      <Clock><Text w={42}>1:39 PM</Text><Text w={46}>3/9/2021</Text></Clock>
    </Tray>
  </Taskbar>
);

export default function App() {
  return (
    <Screen>
      <Global />
      <Browser />
      <Header />
      <RibbonArea />
      <FormulaBar>
        <Field $w={122}><Text w={24} size={12}>G63</Text><Chevron w={6} h={4} ml={85} sw={1.1} /></Field>
        <Field $w={31} $center><Fx>f<small>x</small></Fx></Field>
        <Field />
      </FormulaBar>
      <ColumnHeads>
        <Corner><Icon w={17} h={18}><path fill="#b5b5b5" d="M17 0v18H0z" /></Icon></Corner>
        {["A", "B", "C", "D"].map((c, i) => <ColumnHead key={c} $w={COLS[i]}>{c}</ColumnHead>)}
      </ColumnHeads>
      <SheetArea>
        <SheetView>
          <TopEdge />
          {HEIGHTS.map((_, i) => <SheetRow key={i} n={i + 1} />)}
        </SheetView>
        <ScrollColumn>
          <ScrollPart $w={16}><Icon w={8} h={6}><path fill="#666" d="M4 0l4 6H0z" /></Icon></ScrollPart>
          <ScrollPart $w={16} />
          <ScrollPart $w={16} $mt="auto"><Icon w={8} h={6}><path fill="#666" d="M0 0h8L4 6z" /></Icon></ScrollPart>
        </ScrollColumn>
        <FadingSnip><Text w={84}>Full-screen Snip</Text></FadingSnip>
      </SheetArea>
      <ScrollRow>
        <ScrollPart $w={16}><Icon w={6} h={8}><path fill="#666" d="M6 0v8L0 4z" /></Icon></ScrollPart>
        <ScrollPart $w={360} />
        <ScrollPart $w={16} $ml={913}><Icon w={6} h={8}><path fill="#666" d="M0 0l6 4-6 4z" /></Icon></ScrollPart>
      </ScrollRow>
      <SheetTabs>
        <Icon w={6} h={9} mt={-1} stroke="#b8b8b8" sw={1.2}><path d="M5.500 0L1 4.500 5.500 9" /></Icon>
        <Icon w={6} h={9} ml={28} mt={-1} stroke="#b8b8b8" sw={1.2}><path d="M.5 0L5 4.500.5 9" /></Icon>
        <Icon w={13} h={10} ml={21} mt={-1} stroke="#333" sw={1}><path d="M0 .5h13M0 5h13M0 9.500h13" /></Icon>
        <SheetTab $active $ml={19}><Text w={41} weight={600}>Sheet1</Text></SheetTab>
        <SheetTab $ml={17}><Text w={43}>Sheet2</Text></SheetTab>
        <SheetTab $ml={16}><Text w={43}>Sheet3</Text></SheetTab>
        <Icon w={11} h={11} ml={18} mt={-1} stroke="#333" sw={1.2}><path d="M5.500 0v11M0 5.500h11" /></Icon>
      </SheetTabs>
      <StatusBar>
        <Text w={154}>Calculation Mode: Automatic</Text>
        <Text w={105} ml={18}>Workbook Statistics</Text>
        <Chevron w={5} h={4} ml={756} mt={1} sw={1.2} />
        <Text w={145} ml={43}>Give Feedback to Microsoft</Text>
        <Icon w={11} h={11} ml={42} mt={-2} stroke="#333"><path d="M0 5.500h11" /></Icon>
        <Text w={29} ml={9}>120%</Text>
        <Icon w={11} h={11} ml={7} mt={-2} stroke="#333"><path d="M5.500 0v11M0 5.500h11" /></Icon>
      </StatusBar>
      <TaskbarArea />
    </Screen>
  );
}
